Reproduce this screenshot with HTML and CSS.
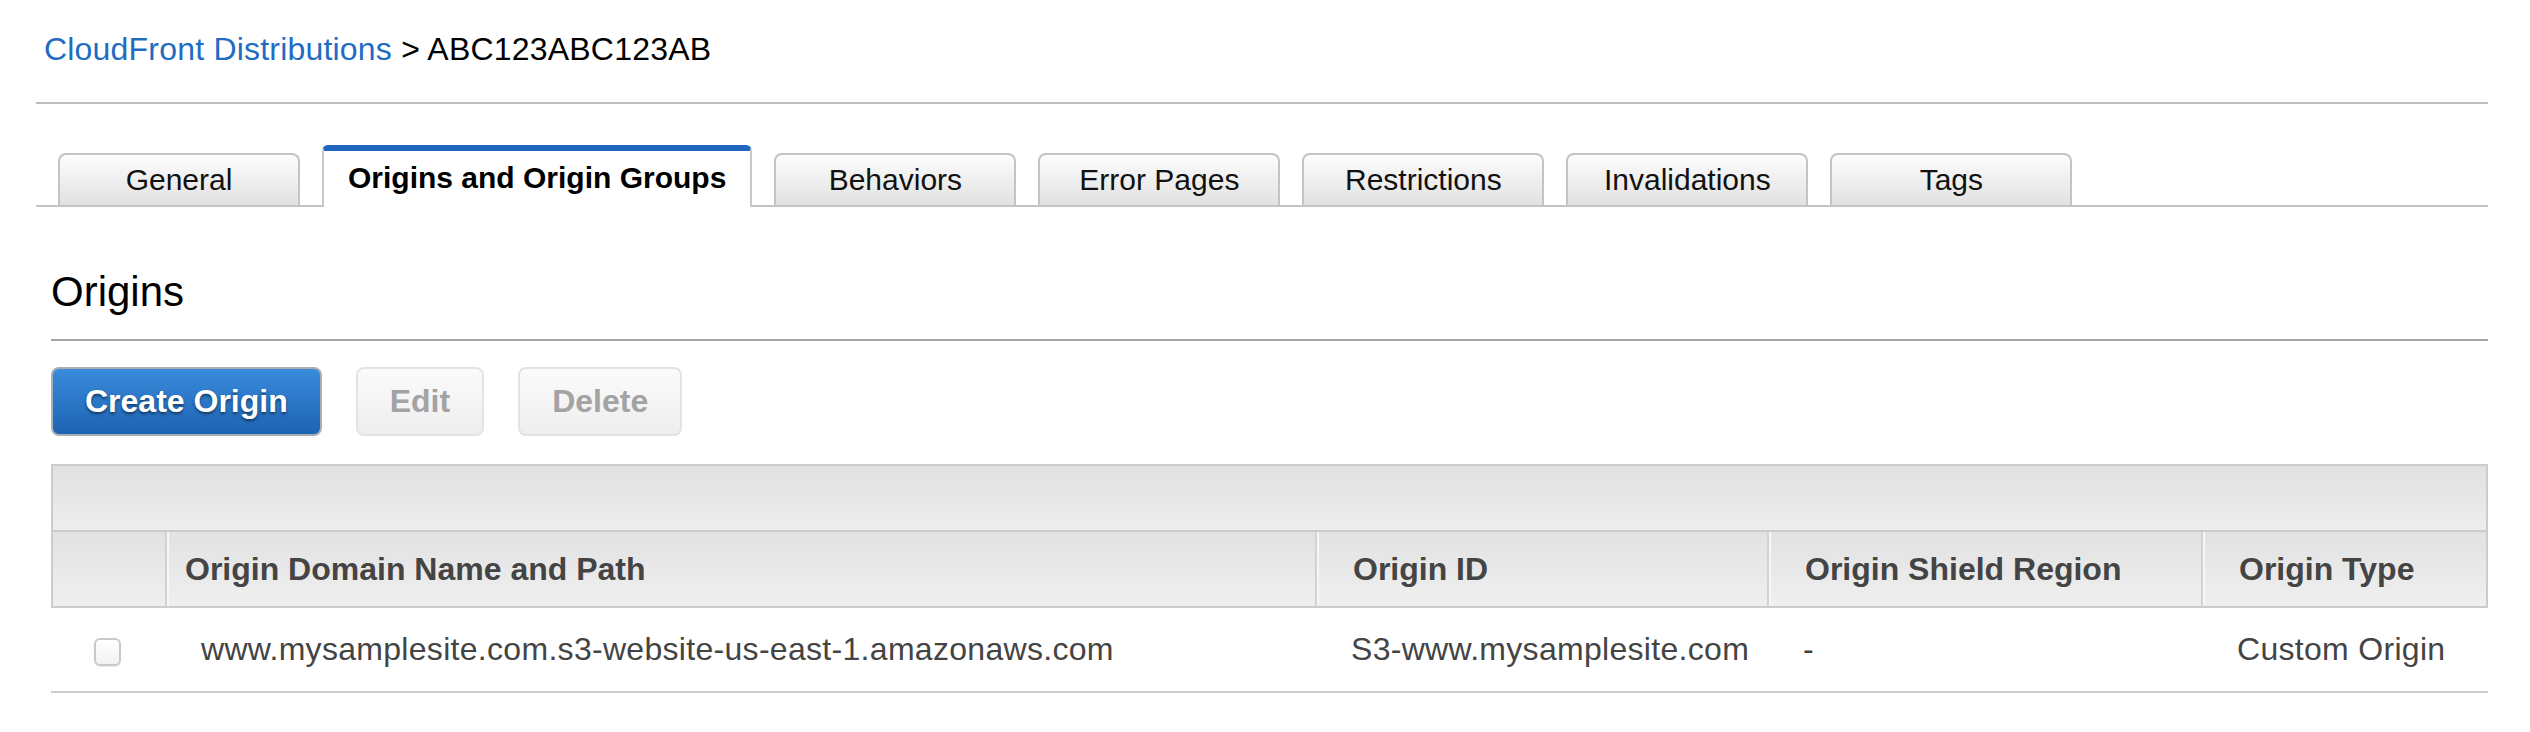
FILE: index.html
```html
<!DOCTYPE html>
<html lang="en">
<head>
<meta charset="utf-8">
<title>CloudFront Distributions - ABC123ABC123AB</title>
<link rel="stylesheet" href="styles.css">
</head>
<body>
<div class="page">
  <nav class="breadcrumb"><a class="crumb-link" href="#">CloudFront Distributions</a> &gt; ABC123ABC123AB</nav>
  <hr class="rule rule-top">
  <ul class="tabs">
    <li class="tab">General</li>
    <li class="tab tab-active">Origins and Origin Groups</li>
    <li class="tab">Behaviors</li>
    <li class="tab">Error Pages</li>
    <li class="tab">Restrictions</li>
    <li class="tab">Invalidations</li>
    <li class="tab">Tags</li>
  </ul>
  <section class="origins">
    <h2 class="section-title">Origins</h2>
    <hr class="rule rule-section">
    <div class="toolbar">
      <button class="btn btn-primary" type="button">Create Origin</button>
      <button class="btn btn-disabled" type="button" disabled>Edit</button>
      <button class="btn btn-disabled" type="button" disabled>Delete</button>
    </div>
    <div class="grid" role="table">
      <div class="grid-top"></div>
      <div class="th th-check"></div>
      <div class="th th-domain">Origin Domain Name and Path</div>
      <div class="th th-sep">Origin ID</div>
      <div class="th th-sep">Origin Shield Region</div>
      <div class="th th-sep th-last">Origin Type</div>
      <div class="td td-check"><span class="checkbox"></span></div>
      <div class="td">www.mysamplesite.com.s3-website-us-east-1.amazonaws.com</div>
      <div class="td">S3-www.mysamplesite.com</div>
      <div class="td">-</div>
      <div class="td">Custom Origin</div>
    </div>
  </section>
</div>
</body>
</html>
```

FILE: styles.css
```css
html, body {
  margin: 0;
  padding: 0;
  background: #ffffff;
}

body {
  font-family: "Liberation Sans", Arial, Helvetica, sans-serif;
  color: #000000;
}

.page {
  padding: 29px 42px 0 36px;
}

.breadcrumb {
  font-size: 32px;
  line-height: 40px;
  margin-left: 8px;
  letter-spacing: 0.2px;
  color: #000000;
}

.crumb-link {
  color: #1f6cc2;
  text-decoration: none;
}

.rule {
  border: 0;
  margin: 0;
  height: 2px;
}

.rule-top {
  margin-top: 33px;
  background: #bdbdbd;
}

.tabs {
  list-style: none;
  margin: 41px 0 0 0;
  padding: 0 0 0 22px;
  display: flex;
  align-items: flex-end;
  gap: 22px;
  border-bottom: 2px solid #c4c4c4;
}

.tab {
  box-sizing: border-box;
  width: 242px;
  height: 52px;
  display: flex;
  align-items: center;
  justify-content: center;
  font-size: 30px;
  color: #111111;
  border: 2px solid #c4c4c4;
  border-bottom: 0;
  border-radius: 8px 8px 0 0;
  background: linear-gradient(#fdfdfd, #e1e1e1);
}

.tab-active {
  width: auto;
  height: 62px;
  margin-bottom: -2px;
  padding: 0 24px 2px;
  font-weight: bold;
  color: #000000;
  background: #ffffff;
  border-top: 6px solid #2066c1;
  border-left-color: #c8c8c8;
  border-right-color: #c8c8c8;
  border-radius: 6px 6px 0 0;
}

.origins {
  margin-left: 15px;
}

.section-title {
  margin: 61px 0 0 0;
  font-size: 42px;
  line-height: 48px;
  font-weight: normal;
  color: #000000;
}

.rule-section {
  margin-top: 23px;
  background: #a4a4a4;
}

.toolbar {
  margin-top: 26px;
  display: flex;
  gap: 34px;
}

.btn {
  box-sizing: border-box;
  height: 69px;
  padding: 0 32px;
  font-family: inherit;
  font-size: 32px;
  font-weight: bold;
  border-radius: 8px;
  border: 2px solid #e2e2e2;
  margin: 0;
}

.btn-primary {
  color: #ffffff;
  background: linear-gradient(#3a8bdb, #1d63b3);
  border-color: #a9aeb4;
  text-shadow: 0 2px 3px rgba(0, 0, 0, 0.5);
}

.btn-disabled {
  color: #a3a3a3;
  background: linear-gradient(#fbfbfb, #eeeeee);
  border-color: #e3e3e3;
}

.grid {
  margin-top: 28px;
  display: grid;
  grid-template-columns: 114px 1150px 452px 434px 1fr;
}

.grid-top {
  grid-column: 1 / -1;
  box-sizing: border-box;
  height: 68px;
  border: 2px solid #cccccc;
  background: linear-gradient(#e1e1e1, #ededed);
}

.th {
  box-sizing: border-box;
  height: 76px;
  display: flex;
  align-items: center;
  padding-left: 36px;
  font-size: 32px;
  font-weight: bold;
  color: #444444;
  white-space: nowrap;
  border-bottom: 2px solid #cccccc;
  background: linear-gradient(#e2e2e2, #efefef);
}

.th-check {
  border-left: 2px solid #cccccc;
  padding-left: 0;
}

.th-domain,
.th-sep {
  border-left: 2px solid #d2d2d2;
  box-shadow: inset 2px 0 0 #f7f7f7;
}

.th-domain {
  padding-left: 18px;
}

.th-last {
  border-right: 2px solid #cccccc;
}

.td {
  box-sizing: border-box;
  height: 85px;
  display: flex;
  align-items: center;
  padding-left: 36px;
  font-size: 32px;
  letter-spacing: 0.3px;
  color: #444444;
  white-space: nowrap;
  border-bottom: 2px solid #cccccc;
}

.td-check {
  padding-left: 0;
  justify-content: center;
}

.checkbox {
  box-sizing: border-box;
  width: 27px;
  height: 28px;
  margin-top: 4px;
  margin-right: 2px;
  border: 2px solid #c9c9c9;
  border-radius: 6px;
  background: linear-gradient(#ffffff, #f3f3f3);
  box-shadow: 0 1px 1px rgba(0, 0, 0, 0.08);
}
```
